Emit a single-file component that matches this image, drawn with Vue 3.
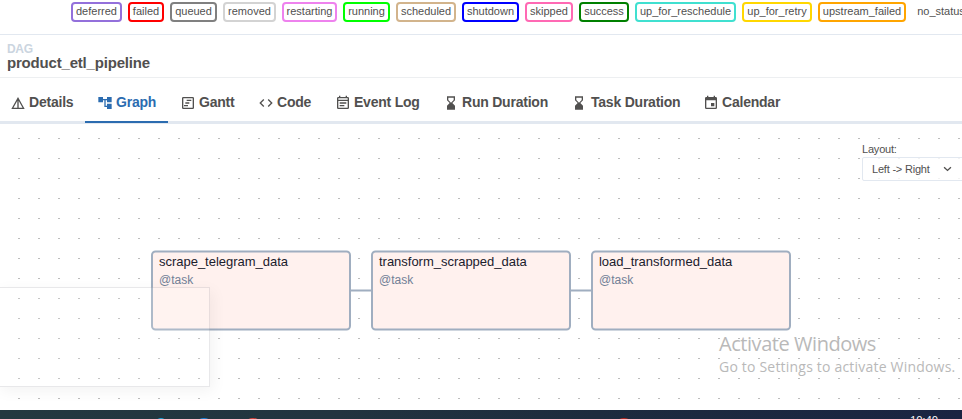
<script setup>
const states = [
  { name: 'deferred', color: '#9370db', width: 51 },
  { name: 'failed', color: '#ff0000', width: 36 },
  { name: 'queued', color: '#808080', width: 47 },
  { name: 'removed', color: '#d3d3d3', width: 53 },
  { name: 'restarting', color: '#ee82ee', width: 55 },
  { name: 'running', color: '#00ff00', width: 47 },
  { name: 'scheduled', color: '#d2b48c', width: 60 },
  { name: 'shutdown', color: '#0000ff', width: 57 },
  { name: 'skipped', color: '#ff69b4', width: 48 },
  { name: 'success', color: '#008000', width: 50 },
  { name: 'up_for_reschedule', color: '#40e0d0', width: 101 },
  { name: 'up_for_retry', color: '#ffd700', width: 70 },
  { name: 'upstream_failed', color: '#ffa500', width: 88 },
  { name: 'no_status', color: 'transparent', width: 58 },
]

const hourglass = 'M6 2v6l4 4-4 4v6h12v-6l-4-4 4-4V2H6zm10 5.500-4 4-4-4V4h8v3.500z'
const tabs = [
  { label: 'Details', width: 87, icon: 'M12 3 2 21h20L12 3zm-1 5.500V19H5.200L11 8.500zm2 0L18.800 19H13V8.500z' },
  { label: 'Graph', width: 83, active: true, icon: 'M22 11V3h-7v3H9V3H2v8h7V8h2v10h4v3h7v-8h-7v3h-2V8h2v3z' },
  { label: 'Gantt', width: 78, icon: 'M19 3H5a2 2 0 0 0-2 2v14a2 2 0 0 0 2 2h14a2 2 0 0 0 2-2V5a2 2 0 0 0-2-2zm0 16H5V5h14v14zM10 7h7v2h-7zM8 11h6v2H8zM6 15h6v2H6z' },
  { label: 'Code', width: 77, icon: 'M9.400 16.600 4.800 12l4.600-4.600L8 6l-6 6 6 6 1.400-1.400zm5.200 0 4.600-4.600-4.600-4.600L16 6l6 6-6 6-1.400-1.400z' },
  { label: 'Event Log', width: 108, icon: 'M7 11h10v2H7zM7 15h7v2H7zM19 3h-1V1h-2v2H8V1H6v2H5a2 2 0 0 0-2 2v14a2 2 0 0 0 2 2h14a2 2 0 0 0 2-2V5a2 2 0 0 0-2-2zm0 16H5V9h14v10zm0-12H5V5h14v2z' },
  { label: 'Run Duration', width: 128, icon: hourglass },
  { label: 'Task Duration', width: 132, icon: hourglass, wide: true },
  { label: 'Calendar', width: 101, icon: 'M17 12h-5v5h5v-5zM16 1v2H8V1H6v2H5a2 2 0 0 0-2 2v14a2 2 0 0 0 2 2h14a2 2 0 0 0 2-2V5a2 2 0 0 0-2-2h-1V1h-2zm3 18H5V8h14v11z' },
]

const nodes = [
  { id: 'scrape_telegram_data', x: 151 },
  { id: 'transform_scrapped_data', x: 371 },
  { id: 'load_transformed_data', x: 591 },
]
</script>

<template>
  <div class="page">
    <div class="legend">
      <span
        v-for="s in states"
        :key="s.name"
        class="state"
        :style="{ borderColor: s.color, width: s.width + 'px' }"
      >{{ s.name }}</span>
    </div>

    <header class="heading">
      <div class="kind">DAG</div>
      <div class="title">product_etl_pipeline</div>
    </header>

    <nav class="tabs">
      <a
        v-for="t in tabs"
        :key="t.label"
        class="tab"
        :class="{ active: t.active, wide: t.wide }"
        :style="{ width: t.width + 'px' }"
      >
        <svg viewBox="0 0 24 24" class="icon"><path :d="t.icon" /></svg>
        <span>{{ t.label }}</span>
      </a>
    </nav>

    <main class="canvas">
      <svg class="shapes" viewBox="0 0 962 286">
        <path d="M351 166.500H371M571 166.500H591" />
        <rect
          v-for="n in nodes"
          :key="n.id"
          :x="n.x + 1"
          y="127.500"
          width="198"
          height="78"
          rx="3.500"
        />
      </svg>
      <div v-for="n in nodes" :key="n.id" class="node" :style="{ left: n.x + 'px' }">
        <div class="name">{{ n.id }}</div>
        <div class="operator">@task</div>
      </div>

      <div class="layout">
        <label class="layout-label">Layout:</label>
        <div class="select">
          <span>Left -&gt; Right</span>
          <svg viewBox="0 0 10 6" class="chevron"><path d="M1.200 1 5 4.600 8.800 1" /></svg>
        </div>
      </div>

      <div class="ghost"></div>
      <div class="watermark">
        <div class="wm-title">Activate Windows</div>
        <div class="wm-text">Go to Settings to activate Windows.</div>
      </div>
    </main>

    <footer class="taskbar">
      <i class="app-dot teal"></i>
      <i class="app-dot blue"></i>
      <i class="app-dot red"></i>
      <i class="app-dot crimson"></i>
      <span class="clock">10:40</span>
    </footer>
  </div>
</template>

<style>
body {
  margin: 0;
  overflow: hidden;
}
</style>

<style scoped>
.page {
  width: 962px;
  height: 419px;
  overflow: hidden;
  display: flex;
  flex-direction: column;
  background: #fff;
  color: #51504f;
  font-family: "Liberation Sans", Arial, sans-serif;
}
.page * {
  box-sizing: border-box;
}
.legend {
  flex: none;
  height: 35px;
  padding: 2px 0 0 71px;
  display: flex;
  gap: 6px;
  border-bottom: 1px solid #e2e8f0;
}
.state {
  flex: none;
  height: 20px;
  border: 2px solid;
  border-radius: 4px;
  font-size: 11px;
  line-height: 15px;
  text-align: center;
  white-space: nowrap;
}
.heading {
  flex: none;
  height: 43px;
  padding: 7px 0 0 7px;
  border-bottom: 1px solid #edeff1;
  font-weight: bold;
}
.kind {
  color: #cbd5e0;
  font-size: 12px;
  line-height: 14px;
  letter-spacing: -0.3px;
}
.title {
  font-size: 15px;
  line-height: 14px;
  letter-spacing: -0.19px;
}
.tabs {
  flex: none;
  height: 46px;
  margin-left: -2px;
  display: flex;
  border-bottom: 3px solid #e2e8f0;
}
.tab {
  flex: none;
  height: 45px;
  padding: 3px 0 0 12px;
  display: flex;
  align-items: center;
  gap: 3px;
  font-size: 14px;
  font-weight: bold;
  letter-spacing: -0.22px;
  white-space: nowrap;
}
.tab.wide {
  gap: 4px;
}
.tab.active {
  color: #2b6cb0;
  box-shadow: inset 0 -2px #2b6cb0;
}
.icon {
  flex: none;
  width: 16px;
  height: 16px;
  margin-top: 1px;
  fill: currentColor;
}
.canvas {
  flex: none;
  position: relative;
  height: 286px;
  overflow: hidden;
}
.canvas::before {
  content: "";
  position: absolute;
  inset: 0;
  background: repeating-linear-gradient(90deg, transparent 0 18px, #bdbdbd 18px 20px);
  mask: repeating-linear-gradient(180deg, transparent 0 14px, #000 14px 15px, transparent 15px 20px);
}
.shapes {
  position: absolute;
  left: 0;
  top: 0;
  width: 962px;
  height: 286px;
  fill: none;
  stroke: #a0aec0;
  stroke-width: 2;
}
.shapes rect {
  fill: #fff1ee;
}
.node {
  position: absolute;
  top: 126px;
  width: 200px;
  height: 80px;
  padding: 4px 8px;
}
.name {
  color: #1a202c;
  font-size: 13px;
  line-height: 15px;
  letter-spacing: -0.02px;
  white-space: nowrap;
}
.operator {
  margin-top: 4px;
  color: #718096;
  font-size: 12px;
  line-height: 15px;
}
.layout {
  position: absolute;
  left: 862px;
  top: 18px;
  width: 102px;
}
.layout-label {
  display: block;
  height: 15px;
  font-size: 11px;
  line-height: 14px;
  letter-spacing: -0.2px;
}
.select {
  height: 24px;
  padding: 0 11px 0 9px;
  display: flex;
  align-items: center;
  justify-content: space-between;
  border: 1px solid #e2e8f0;
  border-radius: 2px;
  background: rgba(255, 255, 255, 0.8);
  font-size: 11px;
  letter-spacing: -0.2px;
}
.chevron {
  width: 9px;
  height: 6px;
  fill: none;
  stroke: #51504f;
  stroke-width: 1.500;
}
.ghost {
  position: absolute;
  left: -2px;
  top: 163px;
  width: 212px;
  height: 100px;
  border: 1px solid rgba(80, 80, 90, 0.13);
  background: rgba(255, 255, 255, 0.15);
  box-shadow: 3px 4px 14px rgba(0, 0, 0, 0.05);
}
.watermark {
  position: absolute;
  left: 719px;
  top: 207px;
  color: #b9b9b9;
  font-family: "Open Sans", "Noto Sans", sans-serif;
  white-space: nowrap;
}
.wm-title {
  font-size: 20px;
  line-height: 26px;
  letter-spacing: -0.45px;
}
.wm-text {
  font-size: 14px;
  line-height: 20px;
  letter-spacing: 0.2px;
}
.taskbar {
  position: relative;
  flex: none;
  height: 9px;
  overflow: hidden;
  background: linear-gradient(90deg, #23393f 0%, #22343f 35%, #1d2b3e 62%, #1a2442 100%);
}
.app-dot {
  position: absolute;
  top: 8px;
  height: 12px;
  border-radius: 50%;
}
.teal {
  left: 155px;
  width: 12px;
  background: #1aa0d4;
}
.blue {
  left: 196px;
  width: 16px;
  background: #1b84d8;
}
.red {
  left: 245px;
  width: 16px;
  background: #d9443a;
}
.crimson {
  left: 616px;
  width: 16px;
  background: #b52a20;
}
.clock {
  position: absolute;
  left: 910px;
  top: 4px;
  color: #fff;
  font-family: "Open Sans", sans-serif;
  font-size: 11px;
  line-height: 12px;
}
</style>
